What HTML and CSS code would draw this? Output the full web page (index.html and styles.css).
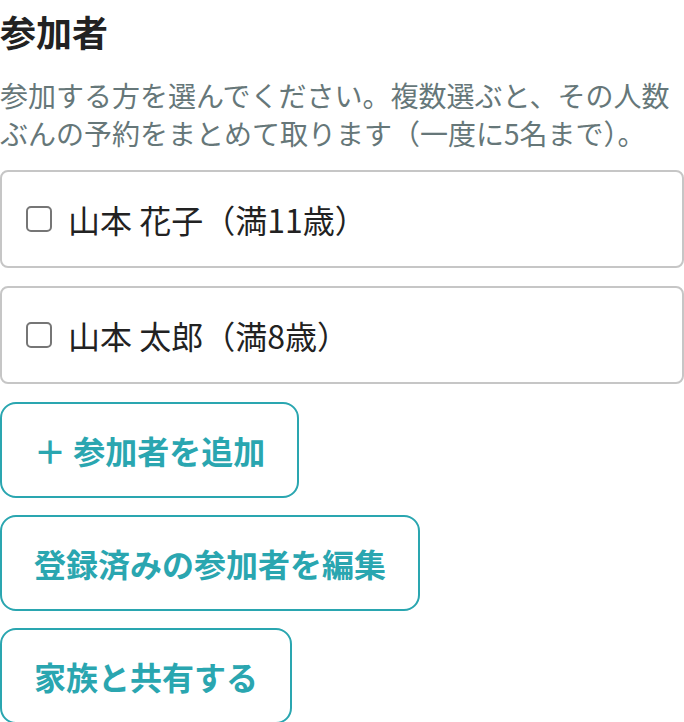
FILE: index.html
```html
<!DOCTYPE html>
<html lang="ja">
<head>
<meta charset="utf-8">
<title>参加者</title>
<link rel="stylesheet" href="styles.css">
</head>
<body>
<main class="participants">
  <h1 class="title">参加者</h1>
  <p class="desc">参加する方を選んでください。複数選ぶと、その人数ぶんの予約をまとめて取ります（一度に5名まで）。</p>
  <div class="stack">
    <label class="person">
      <input type="checkbox" class="check">
      <span class="name">山本 花子（満11歳）</span>
    </label>
    <label class="person">
      <input type="checkbox" class="check">
      <span class="name">山本 太郎（満8歳）</span>
    </label>
    <button class="btn" type="button">＋ 参加者を追加</button>
    <button class="btn" type="button">登録済みの参加者を編集</button>
    <button class="btn" type="button">家族と共有する</button>
  </div>
</main>
</body>
</html>
```

FILE: styles.css
```css
* { box-sizing: border-box; }

html, body {
  margin: 0;
  padding: 0;
  background: #ffffff;
}

body {
  font-family: "Noto Sans CJK JP", "Noto Sans", sans-serif;
  color: #222222;
}

.participants {
  display: flex;
  flex-direction: column;
}

.title {
  margin: 4px 0 0;
  font-size: 36px;
  line-height: 54px;
  font-weight: 700;
  color: #222222;
}

.desc {
  margin: 18px 0 0;
  font-size: 28px;
  line-height: 38px;
  color: #667779;
}

.stack {
  margin-top: 18px;
  display: flex;
  flex-direction: column;
  align-items: flex-start;
  gap: 17px;
}

.person {
  width: 100%;
  display: flex;
  align-items: center;
  padding: 23px 24px;
  margin-bottom: 1px;
  border: 2px solid #c6c6c6;
  border-radius: 8px;
  background: #ffffff;
}

.check {
  appearance: none;
  -webkit-appearance: none;
  width: 26px;
  height: 26px;
  margin: 0 16px 0 0;
  border: 2px solid #767676;
  border-radius: 5px;
  background: #ffffff;
  flex: none;
}

.name {
  font-size: 32px;
  line-height: 48px;
  color: #222222;
}

.btn {
  font-family: "Noto Sans CJK JP", "Noto Sans", sans-serif;
  font-size: 32px;
  line-height: 48px;
  font-weight: 700;
  color: #2aa6b0;
  background: #ffffff;
  border: 2px solid #2aa6b0;
  border-radius: 16px;
  padding: 22px 32px;
  margin: 0;
  white-space: nowrap;
}
```
